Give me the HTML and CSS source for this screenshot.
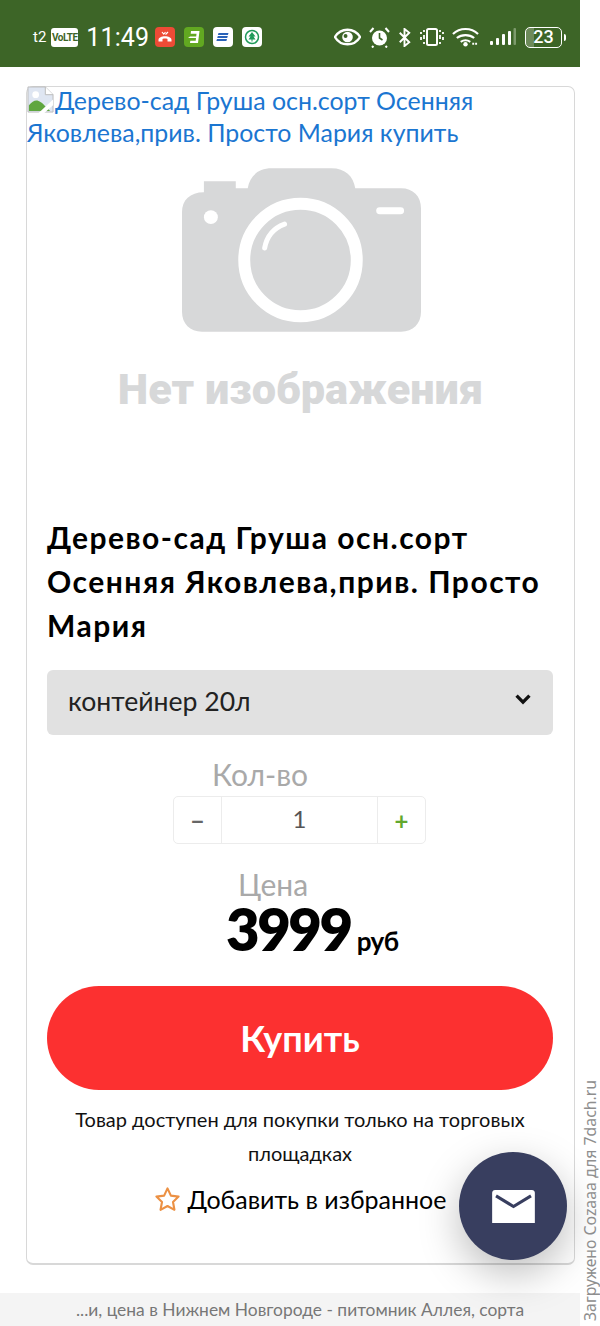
FILE: index.html
```html
<!DOCTYPE html>
<html lang="ru">
<head>
<meta charset="utf-8">
<title>Дерево-сад Груша</title>
<link rel="stylesheet" href="styles.css">
</head>
<body>
<div class="page">
  <header class="status">
    <div class="status-left">
      <span class="t2">t2</span>
      <span class="volte">VoLTE</span>
      <span class="clock">11:49</span>
      <svg class="app" viewBox="0 0 20 20"><rect width="20" height="20" rx="4" fill="#ee4b36"/><path d="M3.500 13c0-5 13-5 13 0v1.500h-4V12c-1.500-.6-3.500-.6-5 0v2.500h-4z" fill="#fff"/><path d="M7 5l2 2.500M13 5l-2.500 2.500M10.500 5l-2 2.500" stroke="#fff" stroke-width="1.200" fill="none"/></svg>
      <svg class="app" viewBox="0 0 20 20"><rect width="20" height="20" rx="4" fill="#62a821"/><path d="M7 4h8.500l-1.500 12H6l.3-2.200h5.400l.3-2.800H4l2-1.500h6.200l.3-2.800H6.700z" fill="#fff"/></svg>
      <svg class="app" viewBox="0 0 20 20"><rect width="20" height="20" rx="4" fill="#fff"/><path d="M5.500 6h10l-.6 2h-10zM4.800 9h10l-.6 2h-10zM4 12h10l-.6 2h-10z" fill="#2a62b8"/></svg>
      <svg class="app" viewBox="0 0 20 20"><rect width="20" height="20" rx="4" fill="#fff"/><circle cx="10" cy="10" r="6.500" fill="none" stroke="#1f9a5a" stroke-width="1.500"/><path d="M10 5l3.500 4.500h-2l2 3h-3v2h-1v-2h-3l2-3h-2z" fill="#1f9a5a"/></svg>
    </div>
    <div class="status-right">
      <svg class="ic-eye" viewBox="0 0 28 18"><path d="M1 9c6-10 20-10 26 0-6 10-20 10-26 0z" fill="none" stroke="#fff" stroke-width="2.400"/><circle cx="14" cy="9" r="5.500" fill="#fff"/><circle cx="12" cy="8" r="2" fill="#3d6527"/></svg>
      <svg class="ic-alarm" viewBox="0 0 22 22"><circle cx="11" cy="12" r="7.500" fill="#fff"/><path d="M11 7v5l3 2" stroke="#3d6527" stroke-width="1.600" fill="none"/><path d="M1.500 6L5 2M20.500 6L17 2M5 20l-1.500 1.500M17 20l1.500 1.500" stroke="#fff" stroke-width="2"/></svg>
      <svg class="ic-bt" viewBox="0 0 12 20"><path d="M1 5l10 10-5 4V1l5 4L1 15" fill="none" stroke="#fff" stroke-width="2"/></svg>
      <svg class="ic-vib" viewBox="0 0 24 20"><rect x="7" y="2" width="10" height="16" rx="1.500" fill="none" stroke="#fff" stroke-width="2"/><path d="M4 3v2M1 5v2M4 8v4M1 10v3M4 15v2M20 3v2M23 5v2M20 8v4M23 10v3M20 15v2" stroke="#fff" stroke-width="1.800"/></svg>
      <svg class="ic-wifi" viewBox="0 0 28 20"><path d="M1 7c7-7 19-7 26 0M5 11c5-4 13-4 18 0M9 15c3-2 7-2 10 0" fill="none" stroke="#fff" stroke-width="2.200"/><circle cx="14" cy="17.500" r="2.300" fill="#fff"/><path d="M21 17h6" stroke="#fff" stroke-width="2" stroke-dasharray="2 1"/></svg>
      <svg class="ic-sig" viewBox="0 0 26 18"><g fill="#fff"><rect x="0" y="13" width="3" height="4" rx="1"/><rect x="6" y="10" width="3" height="7" rx="1"/><rect x="12" y="6" width="3" height="11" rx="1"/><rect x="18" y="3" width="3" height="14" rx="1"/></g><rect x="23.500" y="0" width="2.500" height="17" rx="1" fill="#7d9a6c"/></svg>
      <span class="battery"><span class="battery-num">23</span></span><span class="battery-tip"></span>
    </div>
  </header>

  <main class="card">
    <a class="broken" href="#"><svg class="broken-ic" viewBox="0 0 28 28"><path d="M1 1h18l8 8v18H1z" fill="#dfe6f2" stroke="#b9b9b9"/><path d="M19 1v8h8" fill="#fff" stroke="#b9b9b9"/><path d="M2 26v-6c6-7 10-7 18 2l4 4z" fill="#5fa640"/><path d="M27 14L12 28h6l9-8z" fill="#fff"/><circle cx="9" cy="9" r="3.500" fill="#fff"/></svg>Дерево-сад Груша осн.сорт Осенняя Яковлева,прив. Просто Мария купить</a>

    <div class="noimg">
      <svg class="camera" viewBox="0 0 240 164">
        <path d="M22 24V13h32v7h12C68 8 76 0 90 0h60c14 0 22 8 24 20h46c12 0 20 8 20 20v104c0 12-8 20-20 20H20c-12 0-20-8-20-20V44c0-12 8-20 22-20z" fill="#d7d8d9"/>
        <circle cx="119" cy="92" r="56.500" fill="#d7d8d9" stroke="#fff" stroke-width="12"/>
        <path d="M83 80c2-11 9-20 20-24" fill="none" stroke="#fff" stroke-width="5" stroke-linecap="round"/>
        <circle cx="29" cy="49" r="7" fill="#fff"/>
        <rect x="195" y="39" width="28" height="7" rx="3.500" fill="#fff"/>
      </svg>
      <div class="noimg-text">Нет изображения</div>
    </div>

    <div class="body">
      <h1 class="title">Дерево-сад Груша осн.сорт Осенняя Яковлева,прив. Просто Мария</h1>
      <div class="select"><span class="select-text">контейнер 20л</span>
        <svg class="chev" viewBox="0 0 14 10"><path d="M2 2l5 5 5-5" fill="none" stroke="#111" stroke-width="2.600"/></svg>
      </div>
      <div class="label label-qty">Кол-во</div>
      <div class="qty">
        <span class="qty-btn qty-minus">−</span>
        <span class="qty-val">1</span>
        <span class="qty-btn qty-plus">+</span>
      </div>
      <div class="label label-price">Цена</div>
      <div class="price"><b class="price-num">3999</b> <b class="price-cur">руб</b></div>
      <button class="buy">Купить</button>
      <p class="note">Товар доступен для покупки только на торговых площадках</p>
      <div class="fav">
        <svg class="star" viewBox="0 0 28 28"><path d="M14 2.500l3.500 7.500 8 1-5.800 5.600 1.500 8.100L14 20.700l-7.200 4 1.500-8.100L2.500 11l8-1z" fill="none" stroke="#ec9144" stroke-width="2.200" stroke-linejoin="round"/></svg>
        <span>Добавить в избранное</span>
      </div>
    </div>
  </main>

  <footer class="urlbar">...и, цена в Нижнем Новгороде - питомник Аллея, сорта</footer>
</div>

<button class="fab" aria-label="Написать">
  <svg viewBox="0 0 44 34"><path d="M3 0h38c1.700 0 3 1.300 3 3v31H0V3c0-1.700 1.300-3 3-3z" fill="#fff"/><path d="M4 6l18 11L40 6" fill="none" stroke="#383e5f" stroke-width="3.200"/></svg>
</button>
<div class="watermark">Загружено Cozaaa для 7dach.ru</div>
</body>
</html>
```
FILE: styles.css
```css
* { box-sizing: border-box; }
html, body { margin: 0; padding: 0; background: #fff; }
body { width: 600px; height: 1326px; overflow: hidden; position: relative; font-family: Lato, "Noto Sans", sans-serif; color: #000; }
.page { width: 580px; height: 1326px; display: flex; flex-direction: column; }

.status { height: 67px; flex: none; background: #3d6527; color: #fff; display: flex; justify-content: space-between; align-items: center; padding: 7px 14px 0 33px; }
.status-left, .status-right { display: flex; align-items: center; }
.t2 { font: 15px Roboto, sans-serif; margin-right: 5px; }
.volte { width: 27px; height: 19px; background: #fff; color: #3d6527; border-radius: 3px; font: bold 10px/19px "Liberation Sans Narrow", "Roboto", sans-serif; letter-spacing: -0.5px; text-align: center; margin-right: 8px; }
.clock { font: 25px/1 Roboto, sans-serif; letter-spacing: 0.1px; margin-right: 6px; }
.app { width: 20px; height: 20px; margin-right: 9px; }
.app:last-child { margin-right: 0; }
.ic-eye { width: 27px; height: 18px; margin-right: 7px; }
.ic-alarm { width: 23px; height: 22px; margin-right: 7px; }
.ic-bt { width: 13px; height: 19px; margin-right: 9px; }
.ic-vib { width: 24px; height: 20px; margin-right: 8px; }
.ic-wifi { width: 27px; height: 20px; margin-right: 11px; }
.ic-sig { width: 26px; height: 18px; margin-right: 9px; }
.battery { width: 37px; height: 21px; border: 1.500px solid #fff; border-radius: 5px; display: flex; align-items: center; justify-content: center; background: linear-gradient(90deg, #6d8a5a 0 24%, transparent 24%); }
.battery-num { font: 500 18px/1 Roboto, sans-serif; }
.battery-tip { width: 2px; height: 7px; background: #fff; margin-left: 2px; border-radius: 0 2px 2px 0; }

.card { margin: 19px 5px 0 26px; height: 1179px; flex: none; background: #fff; border: 1px solid #d8d8d8; border-bottom-width: 2px; border-radius: 7px; display: flex; flex-direction: column; }
.broken { display: block; height: 66px; margin-top: -3px; color: #1b76d1; font-size: 24.900px; line-height: 32px; text-decoration: none; }
.broken-ic { width: 27px; height: 27px; vertical-align: -3px; margin-right: 1px; }
.noimg { height: 353px; display: flex; flex-direction: column; align-items: center; padding-top: 18px; }
.camera { width: 239px; height: 164px; margin-left: 2px; flex: none; }
.noimg-text { margin-top: 34px; font: 900 43.300px/48px Roboto, sans-serif; color: #d7d8d9; white-space: nowrap; }

.body { padding: 0 21px 0 20px; display: flex; flex-direction: column; flex: 1; }
.title { margin: 12px -1px 0 0; font-size: 30px; font-weight: 700; line-height: 44px; letter-spacing: 1.500px; }
.select { margin-top: 23px; height: 65px; background: #e1e1e1; border-radius: 6px; display: flex; align-items: center; justify-content: space-between; padding: 0 21px; font-size: 26.600px; color: #222; }
.select-text { margin-bottom: 3px; }
.chev { width: 18px; height: 13px; margin-bottom: 6px; }
.label { color: #a9a9a9; font-size: 30px; line-height: 34px; }
.label-qty { margin: 22px 0 0 165px; }
.qty { width: 253px; height: 48px; margin: 5px 0 0 126px; border: 1px solid #ececec; border-radius: 5px; display: flex; align-items: center; font-size: 24px; color: #555; }
.qty-btn { width: 48px; height: 100%; display: flex; align-items: center; justify-content: center; font-weight: 700; }
.qty-minus { border-right: 1px solid #ececec; color: #666; }
.qty-plus { border-left: 1px solid #ececec; color: #62a82e; }
.qty-val { flex: 1; text-align: center; padding-bottom: 3px; }
.label-price { margin: 23px 0 0 191px; }
.price { margin: -2px 0 0 179px; height: 60px; line-height: 60px; white-space: nowrap; }
.price-num { font-size: 58px; font-weight: 800; letter-spacing: -2.500px; }
.price-cur { font-size: 26px; font-weight: 700; letter-spacing: -0.5px; margin-left: 2px; }
.buy { margin-top: 27px; height: 104px; flex: none; border: 0; border-radius: 52px; background: #fc3030; color: #fff; font: 700 36px Lato, "Noto Sans", sans-serif; }
.note { margin: 12px 0 0; text-align: center; font-size: 20px; line-height: 34px; color: #111; }
.fav { margin: 10px 0 0; display: flex; align-items: center; justify-content: center; gap: 7px; font-size: 25px; line-height: 38px; }
.star { width: 27px; height: 27px; }

.urlbar { margin-top: 28px; flex: 1; background: #f4f4f4; color: #777; font-size: 17.400px; line-height: 33px; padding-left: 76px; white-space: nowrap; overflow: hidden; }

.fab { position: absolute; left: 459px; top: 1152px; width: 108px; height: 108px; border: 0; border-radius: 50%; background: #383e5f; box-shadow: 0 14px 40px rgba(0,0,0,.26); display: flex; align-items: center; justify-content: center; padding: 0; }
.fab svg { width: 43px; height: 33px; }
.watermark { position: absolute; right: 0; bottom: 5px; width: 20px; writing-mode: vertical-rl; transform: rotate(180deg); color: #8e8e8e; font: 15.800px/20px "Noto Sans", sans-serif; white-space: nowrap; }
```
